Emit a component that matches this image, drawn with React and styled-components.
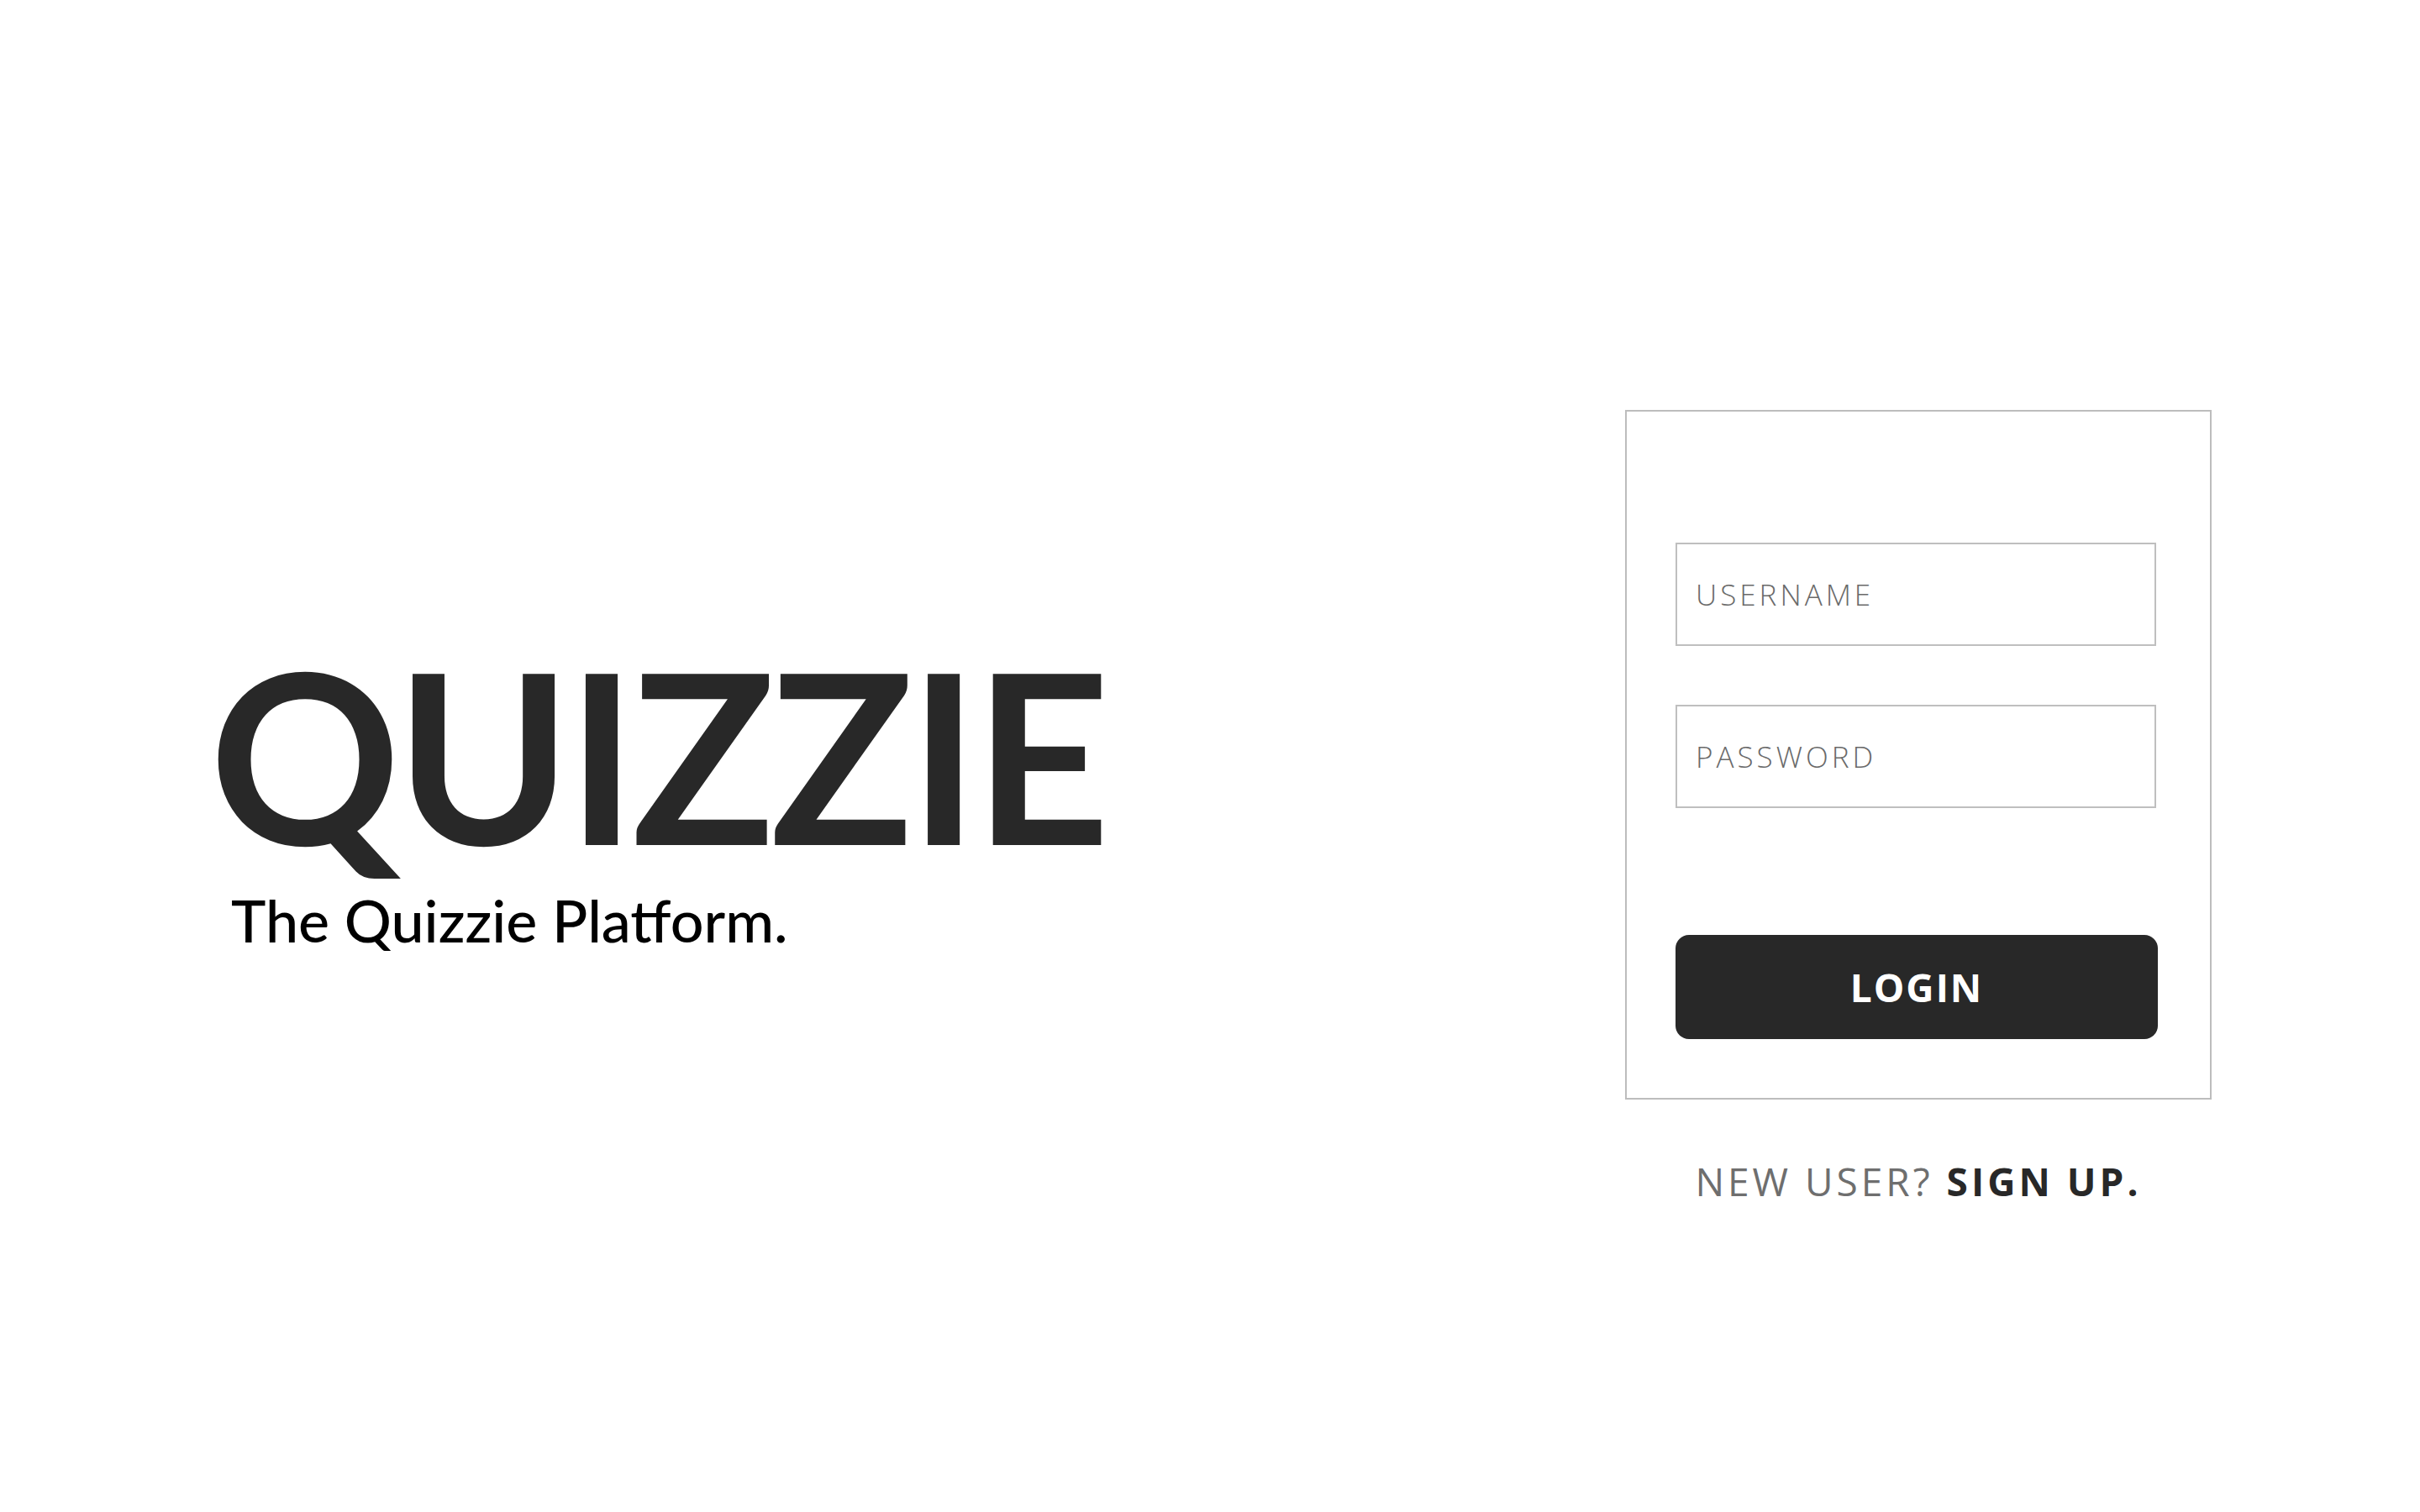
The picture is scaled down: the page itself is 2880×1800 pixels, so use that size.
import React from "react";
import styled, { createGlobalStyle } from "styled-components";

const GlobalStyle = createGlobalStyle`
  * { box-sizing: border-box; }
  body {
    margin: 0;
    background: #ffffff;
    font-family: "Lato", "Open Sans", sans-serif;
  }
`;

const Page = styled.div`
  display: flex;
  justify-content: space-between;
  align-items: flex-start;
  width: 2880px;
  height: 1800px;
  padding: 0 248px 0 249px;
`;

const Brand = styled.div`
  display: flex;
  flex-direction: column;
  padding-top: 756px;
`;

const Title = styled.h1`
  margin: 0;
  font-family: "Lato", sans-serif;
  font-weight: 700;
  font-size: 282px;
  line-height: 1;
  letter-spacing: -6px;
  color: #282828;
`;

const Tagline = styled.p`
  margin: 22px 0 0 26px;
  font-family: "Lato", sans-serif;
  font-weight: 500;
  font-size: 70px;
  line-height: 1;
  color: #000000;
`;

const Side = styled.div`
  display: flex;
  flex-direction: column;
  align-items: center;
  padding-top: 488px;
`;

const Card = styled.form`
  display: flex;
  flex-direction: column;
  width: 698px;
  padding: 156px 64px 70px 58px;
  border: 2px solid #bdbdbd;
`;

const Field = styled.input`
  width: 572px;
  height: 123px;
  margin-bottom: ${(p) => p.$gap}px;
  padding: 0 22px;
  border: 2px solid #bfbfbf;
  border-radius: 0;
  outline: none;
  font-family: "Open Sans", sans-serif;
  font-weight: 300;
  font-size: 35px;
  letter-spacing: 4px;
  color: #333;

  &::placeholder {
    color: #6a6a6a;
  }
`;

const LoginButton = styled.button`
  width: 574px;
  height: 124px;
  border: none;
  border-radius: 16px;
  background: #282828;
  color: #ffffff;
  font-family: "Open Sans", sans-serif;
  font-weight: 700;
  font-size: 46px;
  letter-spacing: 2px;
  cursor: pointer;
`;

const SignupLine = styled.p`
  margin: 74px 0 0;
  font-family: "Open Sans", sans-serif;
  font-size: 46px;
  line-height: 1;
  letter-spacing: 4px;
  color: #6e6e6e;

  b {
    font-weight: 700;
    color: #282828;
  }
`;

export default function App() {
  return (
    <>
      <GlobalStyle />
      <Page>
        <Brand>
          <Title>QUIZZIE</Title>
          <Tagline>The Quizzie Platform.</Tagline>
        </Brand>
        <Side>
          <Card onSubmit={(e) => e.preventDefault()}>
            <Field placeholder="USERNAME" $gap={70} />
            <Field type="password" placeholder="PASSWORD" $gap={151} />
            <LoginButton type="submit">LOGIN</LoginButton>
          </Card>
          <SignupLine>
            NEW USER? <b>SIGN UP.</b>
          </SignupLine>
        </Side>
      </Page>
    </>
  );
}
